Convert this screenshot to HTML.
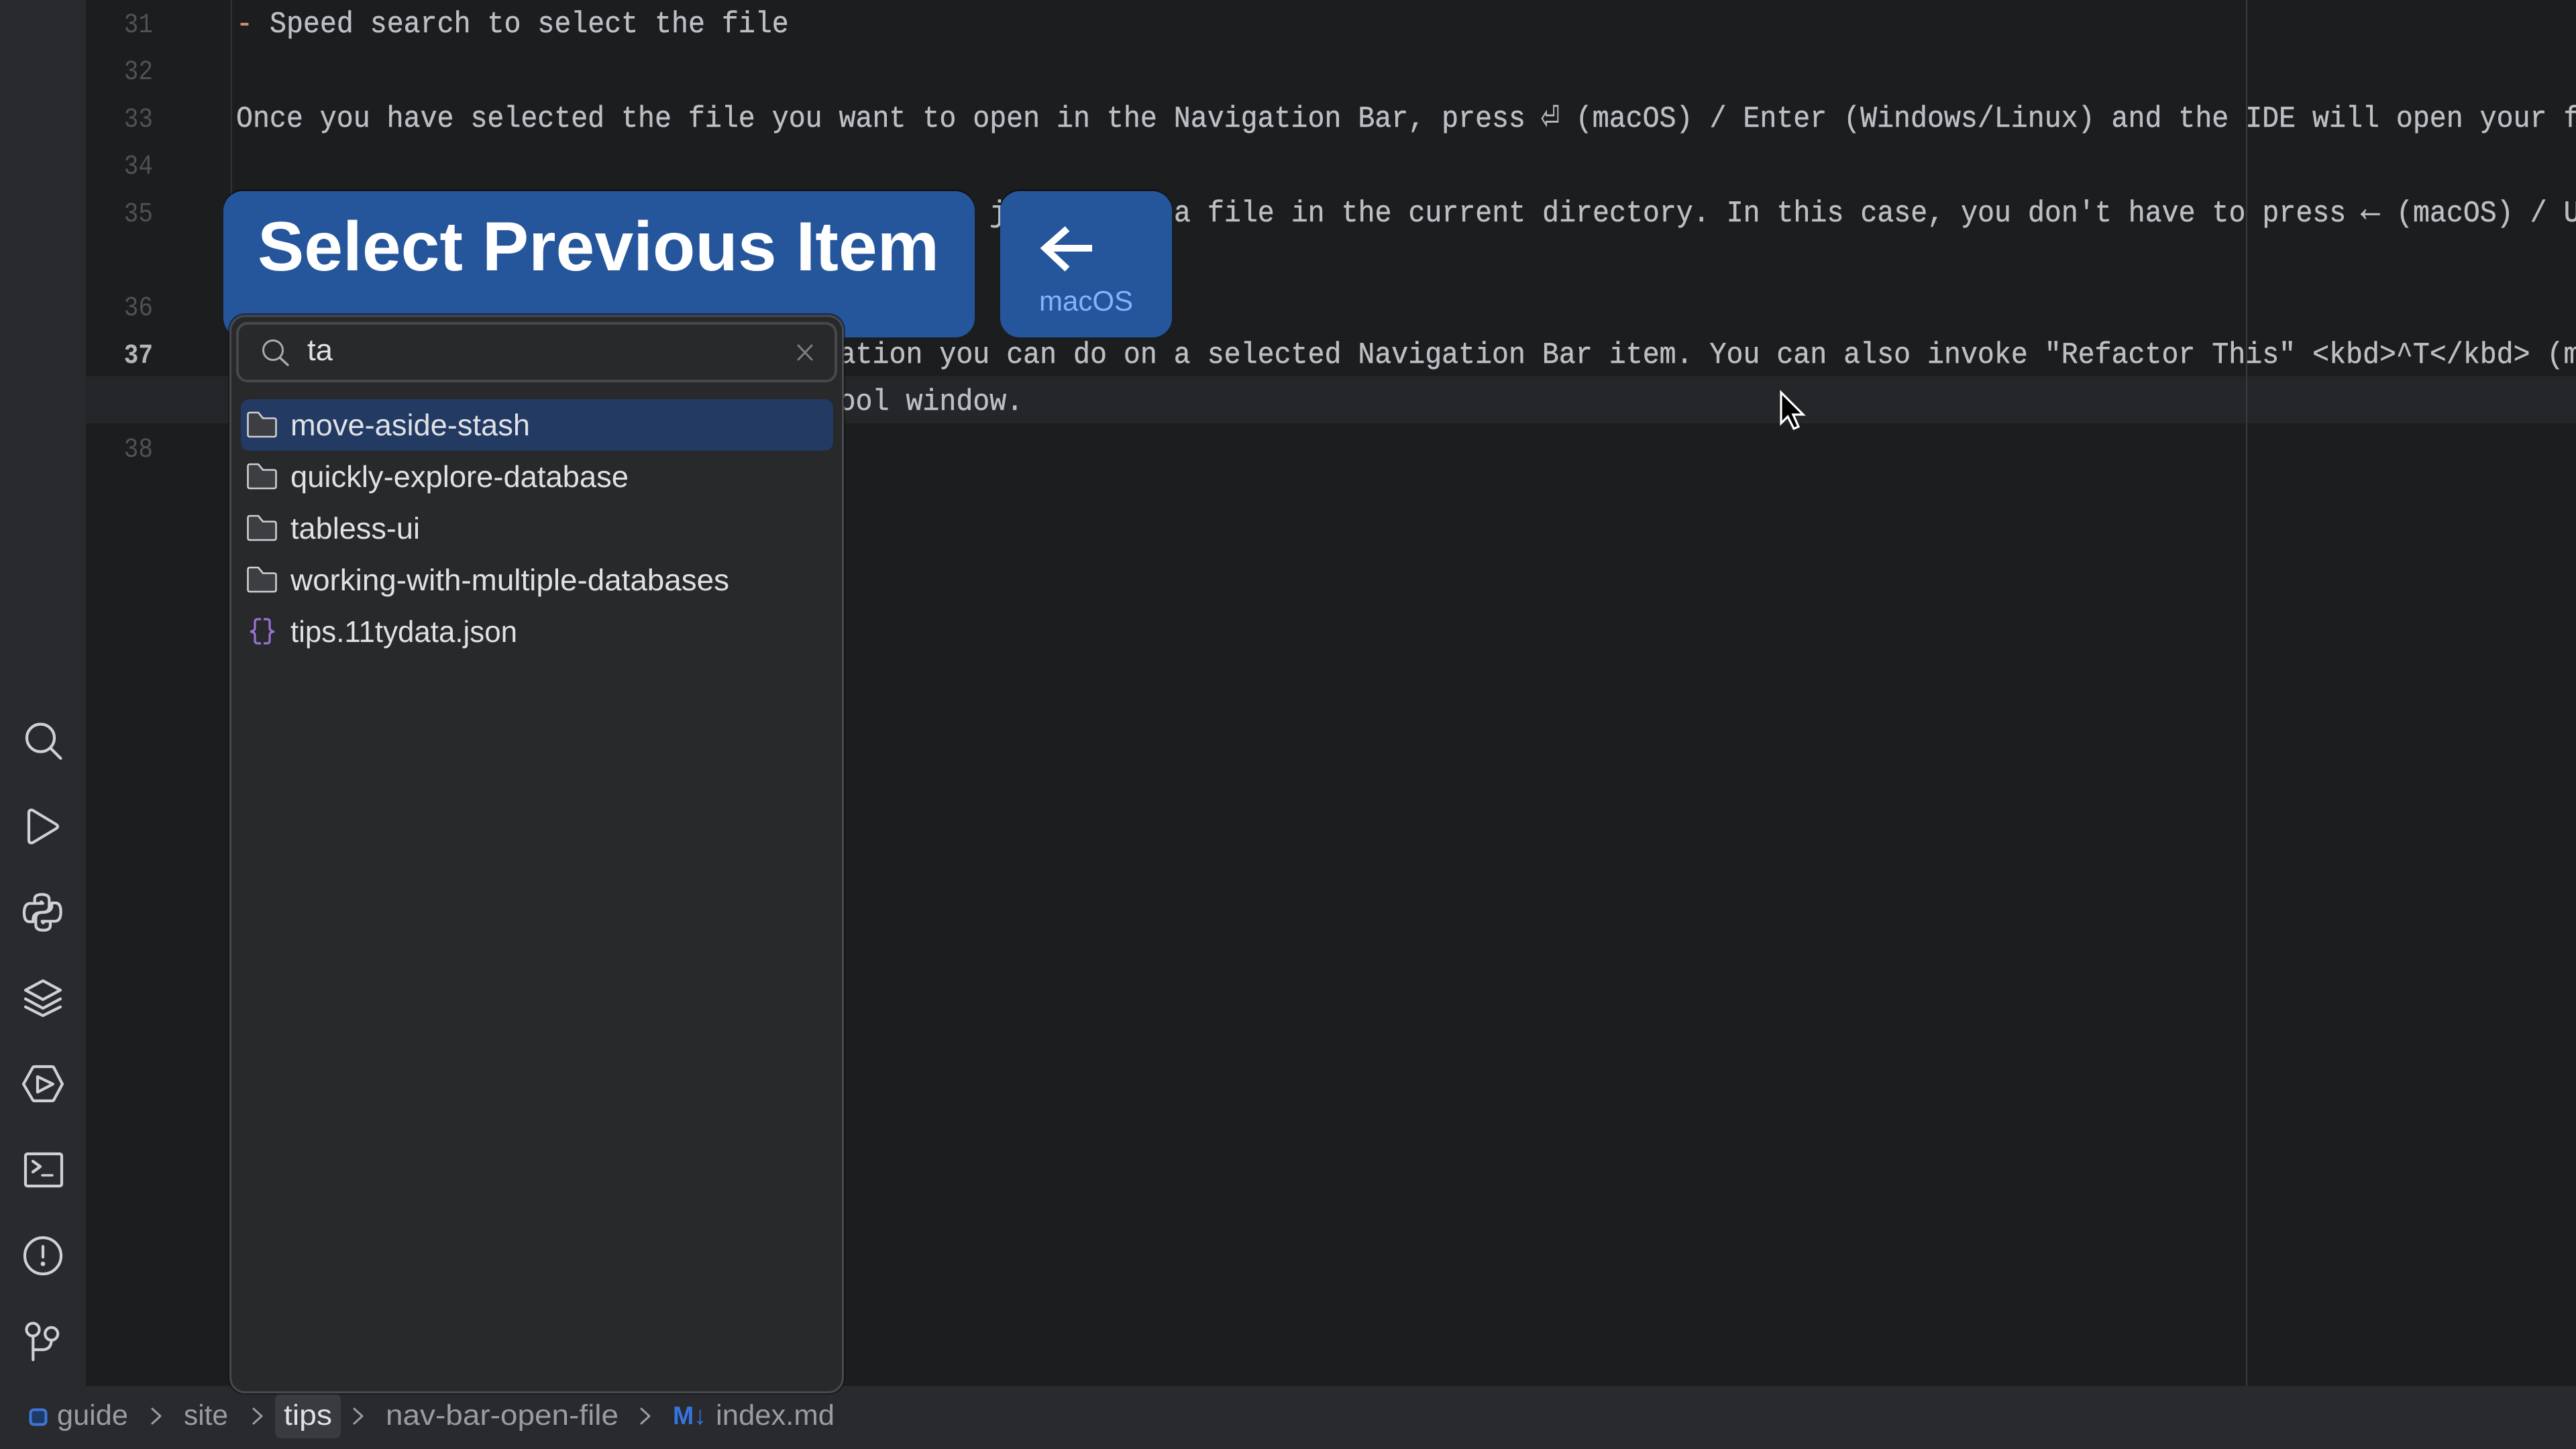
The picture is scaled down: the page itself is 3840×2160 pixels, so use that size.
<!DOCTYPE html>
<html lang="en">
<head>
<meta charset="utf-8">
<title>Select Previous Item</title>
<style>
html,body{margin:0;padding:0;width:3840px;height:2160px;overflow:hidden;background:#1c1d1f}
svg{display:block;position:absolute;left:0;top:0;text-rendering:geometricPrecision}
.m{font-family:"Liberation Mono","DejaVu Sans Mono",monospace;font-size:41.6px;fill:#bcbec4;stroke:#bcbec4;stroke-width:.45;white-space:pre}
.n{font-family:"Liberation Mono",monospace;font-size:36px;fill:#4e5157;text-anchor:end}
.s{font-family:"Liberation Sans",sans-serif}
.r{font-size:45px;fill:#dfe1e5}
.b{font-size:43px;fill:#9a9ca1}
.i{fill:none;stroke:#ced0d6;stroke-width:4.2;stroke-linecap:round;stroke-linejoin:round}
.f{fill:#3c3e42;stroke:#ced0d6;stroke-width:2.6;stroke-linejoin:round}
.c{fill:none;stroke:#9a9ca1;stroke-width:3;stroke-linecap:round;stroke-linejoin:round}
</style>
</head>
<body>
<svg xmlns="http://www.w3.org/2000/svg" width="3840" height="2160" viewBox="0 0 3840 2160">
  <!-- base regions -->
  <rect width="3840" height="2160" fill="#1c1d1f"/>
  <rect x="0" y="0" width="128" height="2066" fill="#292a2d"/>
  <rect x="128" y="561" width="3712" height="70" fill="#25262a"/>
  <rect x="344" y="0" width="2" height="2066" fill="#323438"/>
  <rect x="3348" y="0" width="2" height="2066" fill="#393b3f"/>

  <!-- line numbers -->
  <g class="n">
    <text transform="matrix(1 0 0 1.15 228 48)">31</text>
    <text transform="matrix(1 0 0 1.15 228 118)">32</text>
    <text transform="matrix(1 0 0 1.15 228 189)">33</text>
    <text transform="matrix(1 0 0 1.15 228 259)">34</text>
    <text transform="matrix(1 0 0 1.15 228 330)">35</text>
    <text transform="matrix(1 0 0 1.15 228 470)">36</text>
    <text transform="matrix(1 0 0 1.15 228 541)" style="fill:#b4b6bc;font-weight:bold">37</text>
    <text transform="matrix(1 0 0 1.15 228 681)">38</text>
  </g>

  <!-- code -->
  <g class="m">
    <text transform="matrix(1 0 0 1.08 352 48)" style="fill:#cf8e6d;stroke:#cf8e6d">-</text>
    <text transform="matrix(1 0 0 1.08 402 48)">Speed search to select the file</text>
    <text transform="matrix(1 0 0 1.08 352 189)">Once you have selected the file you want to open in the Navigation Bar, press </text>
    <text transform="matrix(1.1 0 0 1.7 2297 196)" style="stroke-width:.2">⏎</text>
    <text transform="matrix(1 0 0 1.08 2348.8 189)">(macOS) / Enter (Windows/Linux) and the IDE will open your f</text>
    <text transform="matrix(1 0 0 1.08 1475 330)">j</text>
    <text transform="matrix(1 0 0 1.08 1750 330)">a file in the current directory. In this case, you don't have to press </text>
    <text transform="matrix(1.15 0 0 1.4 3519 329)">←</text>
    <text transform="matrix(1 0 0 1.08 3572 330)">(macOS) / U</text>
    <text transform="matrix(1 0 0 1.08 1250.6 541)">ation you can do on a selected Navigation Bar item. You can also invoke "Refactor This" &lt;kbd&gt;^T&lt;/kbd&gt; (m</text>
    <text transform="matrix(1 0 0 1.08 1250.6 611)">ool window.</text>
  </g>

  <!-- mouse pointer -->
  <path d="M2655 585 V631 L2665 621 L2674 639 L2681 636 L2673 618 L2688 618 Z" fill="#000" stroke="#fff" stroke-width="3.2" stroke-linejoin="miter"/>

  <!-- banners -->
  <rect x="333" y="282" width="1120" height="221" rx="29" fill="#0e0f10" opacity=".6"/>
  <rect x="333" y="285" width="1120" height="218" rx="29" fill="#25569c"/>
  <text class="s" x="384" y="403" font-size="104" font-weight="bold" fill="#fff" textLength="1016" lengthAdjust="spacingAndGlyphs">Select Previous Item</text>

  <rect x="1491" y="282" width="256" height="221" rx="29" fill="#0e0f10" opacity=".6"/>
  <rect x="1491" y="285" width="256" height="218" rx="29" fill="#25569c"/>
  <path d="M1591 341 L1558 370 L1591 401 M1558 370 H1628" fill="none" stroke="#fff" stroke-width="10" stroke-linejoin="miter"/>
  <text class="s" x="1549" y="463" font-size="42" fill="#85b2fb" textLength="140" lengthAdjust="spacingAndGlyphs">macOS</text>

  <!-- sidebar icons -->
  <g class="i">
    <circle cx="60.5" cy="1100" r="20.5"/>
    <path d="M76.5 1116.5 L90.5 1130.5"/>
    <path d="M43 1212 Q43 1206 49 1208 L84 1229 Q88 1232 84 1235 L49 1256 Q43 1258 43 1252 Z"/>
    <g transform="translate(20 1320) scale(.3333)" style="stroke-width:12.6">
      <path d="M95 80 V62 Q95 40 127 40 Q160 40 160 64 V92 Q160 120 130 120 Q88 120 88 152 V162 H72 Q48 162 48 122 Q48 82 74 80 H132"/>
      <path d="M165 160 V178 Q165 200 133 200 Q100 200 100 176 V148 Q100 120 130 120 Q172 120 172 88 V78 H188 Q212 78 212 118 Q212 158 186 160 H128"/>
    </g>
    <path d="M64 1462 L90 1476 L64 1490 L38 1476 Z"/>
    <path d="M38 1489 L64 1503 L90 1489"/>
    <path d="M38 1501 L64 1514 L90 1501"/>
    <path d="M35 1616 L49 1591 Q50 1590 52 1590 H77 Q79 1590 80 1591 L93 1616 L80 1640 Q79 1641 77 1641 H52 Q50 1641 49 1640 Z"/>
    <path d="M56 1605 L79 1616 L56 1628 Z"/>
    <rect x="38" y="1720" width="54" height="48" rx="3"/>
    <path d="M49 1731 L60 1739 L49 1747"/>
    <path d="M63 1752 H78" style="stroke-width:3.5"/>
    <circle cx="64" cy="1872" r="27"/>
    <path d="M64 1858 V1874"/>
    <circle cx="49" cy="1982" r="9.5"/>
    <circle cx="76.7" cy="1988.3" r="9.5"/>
    <path d="M49.3 1992 V2027"/>
    <path d="M49.3 2012 H63 Q76 2012 76.7 1998"/>
  </g>
  <circle cx="61.7" cy="1345" r="2.8" fill="#ced0d6"/>
  <circle cx="64.3" cy="1375" r="2.8" fill="#ced0d6"/>
  <circle cx="64" cy="1884" r="3.4" fill="#ced0d6"/>

  <!-- status bar -->
  <rect x="0" y="2066" width="3840" height="94" fill="#292a2d"/>
  <rect x="45.5" y="2101.5" width="23" height="22" rx="5" fill="#1f3a66" stroke="#3d76d6" stroke-width="4"/>
  <rect x="410" y="2078" width="98" height="66" rx="8" fill="#393b40"/>
  <g class="s b">
    <text x="85" y="2124" textLength="106" lengthAdjust="spacingAndGlyphs">guide</text>
    <text x="274" y="2124" textLength="66" lengthAdjust="spacingAndGlyphs">site</text>
    <text x="423" y="2124" textLength="72" lengthAdjust="spacingAndGlyphs" style="fill:#dfe1e5">tips</text>
    <text x="575" y="2124" textLength="347" lengthAdjust="spacingAndGlyphs">nav-bar-open-file</text>
    <text x="1067" y="2124" textLength="177" lengthAdjust="spacingAndGlyphs">index.md</text>
    <text x="1003" y="2123" textLength="50" lengthAdjust="spacingAndGlyphs" style="fill:#3574e0;font-weight:bold;font-size:38px">M↓</text>
  </g>
  <path class="c" d="M227 2100 L239 2111 L227 2122"/>
  <path class="c" d="M378 2100 L390 2111 L378 2122"/>
  <path class="c" d="M528 2100 L540 2111 L528 2122"/>
  <path class="c" d="M956 2100 L968 2111 L956 2122"/>

  <!-- popup -->
  <rect x="340" y="467" width="920" height="1612" rx="25" fill="#0e0f10" opacity=".55"/>
  <rect x="343.5" y="471" width="913" height="1604.5" rx="22" fill="#28292b" stroke="#47494c" stroke-width="3"/>
  <rect x="354" y="482" width="892" height="86" rx="15" fill="#28292b" stroke="#46484c" stroke-width="4"/>
  <circle cx="407" cy="522" r="14.5" fill="none" stroke="#a9acb2" stroke-width="3"/>
  <path d="M417 533 L429 544" fill="none" stroke="#a9acb2" stroke-width="3.4" stroke-linecap="round"/>
  <text class="s r" x="458" y="537" textLength="38" lengthAdjust="spacingAndGlyphs">ta</text>
  <path d="M1190 515 L1210 536 M1210 515 L1190 536" fill="none" stroke="#7a7e85" stroke-width="3" stroke-linecap="round"/>

  <rect x="359" y="595" width="883" height="77" rx="13" fill="#233a62"/>

  <g>
    <path class="f" d="M369.5 618 Q369.5 615 372.5 615 H385 L392 623.5 H408.5 Q411.5 623.5 411.5 626.5 V648 Q411.5 651 408.5 651 H372.5 Q369.5 651 369.5 648 Z"/>
    <path class="f" transform="translate(0 77)" d="M369.5 618 Q369.5 615 372.5 615 H385 L392 623.5 H408.5 Q411.5 623.5 411.5 626.5 V648 Q411.5 651 408.5 651 H372.5 Q369.5 651 369.5 648 Z"/>
    <path class="f" transform="translate(0 154)" d="M369.5 618 Q369.5 615 372.5 615 H385 L392 623.5 H408.5 Q411.5 623.5 411.5 626.5 V648 Q411.5 651 408.5 651 H372.5 Q369.5 651 369.5 648 Z"/>
    <path class="f" transform="translate(0 231)" d="M369.5 618 Q369.5 615 372.5 615 H385 L392 623.5 H408.5 Q411.5 623.5 411.5 626.5 V648 Q411.5 651 408.5 651 H372.5 Q369.5 651 369.5 648 Z"/>
    <path d="M389 923 H384 Q380 923 380 927 V936 Q380 941 373 941.5 Q380 942 380 947 V955 Q380 959 384 959 H389 M393 923 H398 Q402 923 402 927 V936 Q402 941 409 941.5 Q402 942 402 947 V955 Q402 959 398 959 H393" fill="none" stroke="#9a72d6" stroke-width="3.2"/>
  </g>
  <g class="s r">
    <text x="433" y="649" textLength="357" lengthAdjust="spacingAndGlyphs">move-aside-stash</text>
    <text x="433" y="726" textLength="504" lengthAdjust="spacingAndGlyphs">quickly-explore-database</text>
    <text x="433" y="803" textLength="193" lengthAdjust="spacingAndGlyphs">tabless-ui</text>
    <text x="433" y="880" textLength="654" lengthAdjust="spacingAndGlyphs">working-with-multiple-databases</text>
    <text x="433" y="957" textLength="338" lengthAdjust="spacingAndGlyphs">tips.11tydata.json</text>
  </g>
</svg>
</body>
</html>
